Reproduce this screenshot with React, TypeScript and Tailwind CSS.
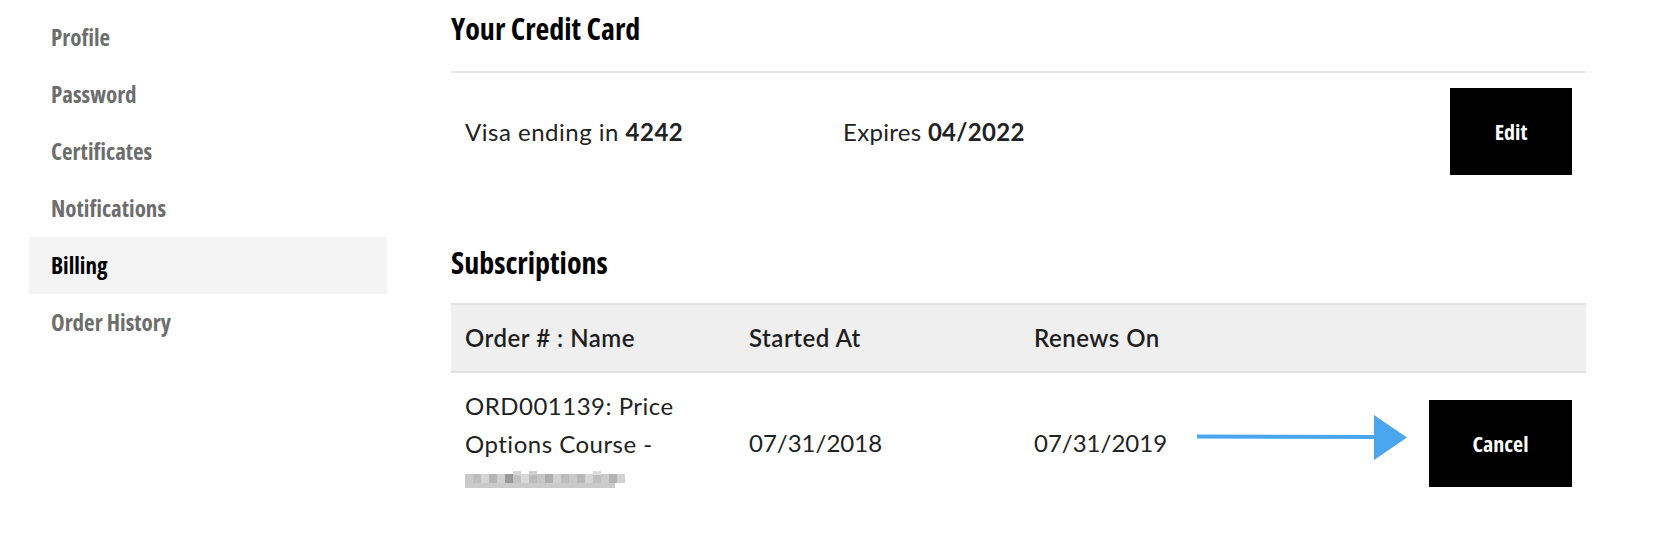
import React from 'react';

const NAV = ['Profile', 'Password', 'Certificates', 'Notifications', 'Billing', 'Order History'];

const COND = "font-['Open_Sans',Roboto,sans-serif] [font-stretch:75%] font-bold";
const BODY = "font-['Lato','Open_Sans',sans-serif]";

// greys for the pixelated (redacted) email line
const BLUR = ['#c9c9c9', '#bdbdbd', '#d4d4d4', '#b5b5b5', '#cfcfcf', '#9a9a9a', '#c2c2c2', '#dadada', '#bababa', '#c6c6c6', '#aeaeae', '#d0d0d0', '#bcbcbc', '#c8c8c8', '#b8b8b8', '#d6d6d6', '#c0c0c0', '#cbcbcb', '#b2b2b2', '#d2d2d2'];

function Redacted() {
  return (
    <svg width="160" height="22" viewBox="0 0 160 22" className="block">
      {BLUR.map((c, i) => (
        <rect key={i} x={i * 8} y={4} width={8} height={9} fill={c} />
      ))}
      <rect x={48} y={1} width={8} height={4} fill="#d8d8d8" />
      <rect x={64} y={1} width={8} height={4} fill="#cfcfcf" />
      <rect x={128} y={1} width={8} height={4} fill="#dddddd" />
      <rect x={0} y={13} width={150} height={5} fill="#8a8a8a" opacity="0.45" />
    </svg>
  );
}

function Arrow() {
  return (
    <svg width="212" height="46" viewBox="0 0 212 46" className="block">
      <path d="M1 19.5 L179 20 L179 24 L1 23.5 Z" fill="#4aa6ee" />
      <path d="M178 0 L211 22.5 L178 45 Z" fill="#4aa6ee" />
    </svg>
  );
}

export default function App() {
  return (
    <div className="flex w-[1656px] h-[548px] bg-white text-[#222]">
      <aside className="w-[387px] pl-[29px] pt-[9px] shrink-0">
        {NAV.map((item) => (
          <div
            key={item}
            className={`h-[57px] flex items-center pl-[22px] text-[23px] ${COND} ${
              item === 'Billing' ? 'bg-[#f4f4f4] text-black' : 'text-[#6d6d6d]'
            }`}
          >
            {item}
          </div>
        ))}
      </aside>

      <main className="ml-[64px] w-[1135px] pt-[10px]">
        <h2 className={`text-[30px] leading-[38px] text-black ${COND}`}>Your Credit Card</h2>
        <div className="mt-[23px] border-t-2 border-[#e6e6e6] flex items-center h-[120px] pl-[14px] pr-[14px]">
          <div className={`${BODY} text-[24px] tracking-[0.5px] text-[#222] w-[378px]`}>
            Visa ending in <span className="font-bold">4242</span>
          </div>
          <div className={`${BODY} text-[24px] tracking-[0.3px] text-[#222]`}>
            Expires <span className="font-bold">04/2022</span>
          </div>
          <button
            type="button"
            className={`ml-auto -mt-[1px] w-[122px] h-[87px] bg-black text-white text-[22px] ${COND}`}
          >
            Edit
          </button>
        </div>

        <h2 className={`mt-[53px] text-[30px] leading-[38px] text-black ${COND}`}>Subscriptions</h2>
        <div className="mt-[21px]">
          <div className={`grid grid-cols-[284px_285px_1fr] items-center h-[70px] bg-[#efefef] border-y-2 border-[#e2e2e2] pl-[14px] ${BODY} text-[24px] tracking-[0.5px] font-semibold text-[#1e1e1e]`}>
            <div>Order # : Name</div>
            <div>Started At</div>
            <div>Renews On</div>
          </div>
          <div className={`relative grid grid-cols-[284px_285px_1fr_auto] items-center pl-[14px] pr-[14px] pt-[14px] ${BODY} text-[24px] text-[#222]`}>
            <div className="leading-[37.5px] tracking-[0.5px]">
              <div>ORD001139: Price</div>
              <div>Options Course -</div>
              <div className="h-[37px] flex items-center">
                <Redacted />
              </div>
            </div>
            <div>07/31/2018</div>
            <div>07/31/2019</div>
            <button
              type="button"
              className={`w-[143px] h-[87px] bg-black text-white text-[22px] ${COND}`}
            >
              Cancel
            </button>
            <div className="absolute left-[745px] top-[42px]">
              <Arrow />
            </div>
          </div>
        </div>
      </main>
    </div>
  );
}
